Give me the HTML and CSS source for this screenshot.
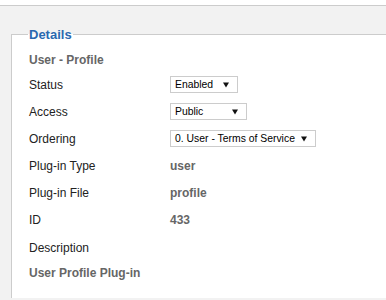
FILE: index.html
```html
<!DOCTYPE html>
<html lang="en">
<head>
  <meta charset="UTF-8" />
  <title>Plug-in Manager: User - Profile</title>
  <link rel="stylesheet" href="styles.css">
</head>
<body>
  <div class="page">
    <fieldset class="details">
      <legend>Details</legend>
      <div class="title">User - Profile</div>
      <div class="rows">
        <div class="label">Status</div>
        <div class="select w-status"><span>Enabled</span><svg class="arrow" width="6" height="6" viewBox="0 0 6 6"><path d="M0 0.5H6L3 5.5Z" fill="#111"/></svg></div>

        <div class="label">Access</div>
        <div class="select w-access"><span>Public</span><svg class="arrow" width="6" height="6" viewBox="0 0 6 6"><path d="M0 0.5H6L3 5.5Z" fill="#111"/></svg></div>

        <div class="label">Ordering</div>
        <div class="select w-order"><span>0. User - Terms of Service</span><svg class="arrow" width="6" height="6" viewBox="0 0 6 6"><path d="M0 0.5H6L3 5.5Z" fill="#111"/></svg></div>

        <div class="label">Plug-in Type</div>
        <div class="value">user</div>

        <div class="label">Plug-in File</div>
        <div class="value">profile</div>

        <div class="label">ID</div>
        <div class="value">433</div>

        <div class="label">Description</div>
        <div></div>
      </div>
      <div class="desc">User Profile Plug-in</div>
    </fieldset>
  </div>
</body>
</html>
```

FILE: styles.css
```css
html, body {
  margin: 0;
  padding: 0;
  background: #fff;
  font-family: "Liberation Sans", Arial, sans-serif;
  font-size: 12px;
  color: #222;
  overflow: hidden;
}

.page {
  margin-top: 5px;
  border-top: 1px solid #ccc;
  background: #f2f2f2;
  padding: 21px 0 0 11px;
  height: 273px;
}

.details {
  margin: 0;
  border: 1px solid #ccc;
  border-right: none;
  border-bottom: none;
  background: #fff;
  padding: 10px 0 0 17px;
  height: 260px;
}

.details legend {
  padding: 0 1px;
  margin-left: -1px;
  font-size: 13px;
  font-weight: bold;
  color: #2a69b0;
}

.title, .desc, .value {
  font-weight: bold;
  color: #666;
}

.title {
  line-height: 17px;
  margin-bottom: 7px;
}

.rows {
  display: grid;
  grid-template-columns: 141px auto;
  grid-auto-rows: 17px;
  row-gap: 10.2px;
  align-items: center;
  justify-items: start;
}

.desc {
  margin-top: 9px;
  line-height: 17px;
}

.select {
  box-sizing: border-box;
  height: 17px;
  border: 1px solid #ccc;
  display: flex;
  align-items: center;
  justify-content: space-between;
  padding: 0 8px 0 4px;
  font-size: 10.4px;
  color: #000;
  white-space: nowrap;
}

.select .arrow {
  flex: none;
}

.w-status { width: 68px; }
.w-access { width: 77px; }
.w-order { width: 146px; }
```
